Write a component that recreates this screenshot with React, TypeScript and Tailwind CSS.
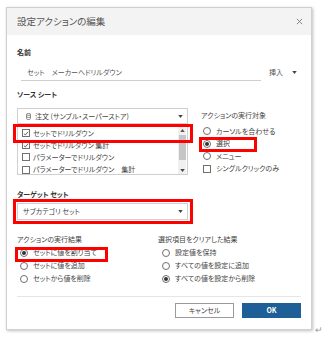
import React from "react";

const jp = "font-['Meiryo_UI','Noto_Sans_CJK_JP',sans-serif] [font-feature-settings:'palt']";

function Check({ on }: { on?: boolean }) {
  return (
    <span className="flex h-[8px] w-[8px] shrink-0 items-center justify-center border border-[#707070] bg-white">
      {on && (
        <svg viewBox="0 0 8 8" className="h-[7px] w-[7px]">
          <path d="M1.2 4.2 L3.1 6 L6.8 1.6" fill="none" stroke="#333" strokeWidth="1" />
        </svg>
      )}
    </span>
  );
}

function Radio({ on }: { on?: boolean }) {
  return (
    <span className="flex h-[8px] w-[8px] shrink-0 items-center justify-center rounded-full border border-[#707070] bg-white">
      {on && <span className="h-[4px] w-[4px] rounded-full bg-[#333]" />}
    </span>
  );
}

function Caret() {
  return (
    <svg viewBox="0 0 6 4" className="h-[3px] w-[5px]">
      <path d="M0 0 H6 L3 4 Z" fill="#444" />
    </svg>
  );
}

function RadioRow({ label, on, h }: { label: string; on?: boolean; h: string }) {
  return (
    <div className={`flex items-center gap-[5px] pl-[2px] ${h}`}>
      <Radio on={on} />
      <span>{label}</span>
    </div>
  );
}

export default function App() {
  return (
    <div className={`flex h-[337px] w-[326px] items-end bg-white text-[7px] leading-none text-[#444] ${jp}`}>
      <div className="relative mb-[7px] ml-[6px] flex h-[323px] w-[306px] flex-col border border-[#d0d0d0] bg-white shadow-[1px_1px_3px_rgba(0,0,0,0.25)]">
        <div className="flex h-[27px] items-center justify-between bg-[#f3f3f3] pl-[10px] pr-[8px]">
          <span className="text-[9.5px] text-[#555]">設定アクションの編集</span>
          <svg viewBox="0 0 8 8" className="h-[7px] w-[7px]">
            <path d="M1 1 L7 7 M7 1 L1 7" stroke="#777" strokeWidth="1" />
          </svg>
        </div>

        <div className="flex flex-1 flex-col px-[10px] pt-[11px]">
          <div className="flex h-[12px] items-center font-bold text-[#333]">名前</div>
          <div className="mt-[6px] flex h-[17px] items-center">
            <div className="ml-[4px] flex h-[17px] w-[240px] items-center border-b border-[#cfcfcf] pl-[6px] text-[#555]">
              セット　メーカーへドリルダウン
            </div>
            <span className="ml-[8px] text-[#555]">挿入</span>
            <span className="ml-[9px]">
              <Caret />
            </span>
          </div>

          <div className="mt-[7px] flex h-[12px] items-center font-bold text-[#333]">ソース シート</div>

          <div className="flex">
            <div className="mt-[8px] flex w-[171px] flex-col">
              <div className="flex h-[16px] items-center border border-[#cfcfcf] pl-[8px] pr-[4px]">
                <svg viewBox="0 0 6 8" className="h-[7px] w-[5px]">
                  <ellipse cx="3" cy="1.5" rx="2.5" ry="1.1" fill="none" stroke="#555" strokeWidth="0.8" />
                  <path d="M0.5 1.5 V6.5 A2.5 1.1 0 0 0 5.5 6.5 V1.5 M0.5 4 A2.5 1.1 0 0 0 5.5 4" fill="none" stroke="#555" strokeWidth="0.8" />
                </svg>
                <span className="ml-[4px] flex-1">注文 (サンプル・スーパーストア)</span>
                <Caret />
              </div>
              <div className="flex h-[51px] border border-t-0 border-[#cfcfcf]">
                <div className="flex flex-1 flex-col overflow-hidden pl-[4px] pt-[3px]">
                  {[
                    ["セットでドリルダウン", true],
                    ["セットでドリルダウン 集計", true],
                    ["パラメーターでドリルダウン", false],
                    ["パラメーターでドリルダウン　集計", false],
                  ].map(([t, on]) => (
                    <div key={t as string} className="flex h-[12.2px] shrink-0 items-center gap-[3px]">
                      <Check on={on as boolean} />
                      <span>{t as string}</span>
                    </div>
                  ))}
                </div>
                <div className="mr-[1px] flex w-[8px] flex-col items-center bg-[#f0f0f0] py-[2px]">
                  <svg viewBox="0 0 6 4" className="mt-[3px] h-[3px] w-[5px]">
                    <path d="M0 4 H6 L3 0 Z" fill="#555" />
                  </svg>
                  <div className="mt-[3px] h-[25px] w-[7px] bg-[#c6c6c6]" />
                  <div className="mt-auto">
                    <Caret />
                  </div>
                </div>
              </div>
            </div>

            <div className="ml-[13px] flex flex-col">
              <div className="mt-[9px] flex h-[12px] items-center">アクションの実行対象</div>
              <div className="mt-[4px] flex flex-col">
                <RadioRow label="カーソルを合わせる" h="h-[12.5px]" />
                <RadioRow label="選択" on h="h-[12.5px]" />
                <RadioRow label="メニュー" h="h-[12.5px]" />
                <div className="flex h-[12.5px] items-center gap-[5px] pl-[2px]">
                  <Check />
                  <span>シングルクリックのみ</span>
                </div>
              </div>
            </div>
          </div>

          <div className="mt-[13px] flex h-[12px] items-center font-bold text-[#333]">ターゲット セット</div>
          <div className="mt-[3px] flex h-[17px] w-[171px] items-center border border-[#cfcfcf] pl-[5px] pr-[4px]">
            <span className="flex-1">サブカテゴリ セット</span>
            <Caret />
          </div>

          <div className="mt-[13px] flex">
            <div className="flex w-[141px] flex-col">
              <div className="flex h-[12px] items-center">アクションの実行結果</div>
              <div className="mt-[1px] flex flex-col pl-[1px]">
                <RadioRow label="セットに値を割り当て" on h="h-[13px]" />
                <RadioRow label="セットに値を追加" h="h-[13px]" />
                <RadioRow label="セットから値を削除" h="h-[13px]" />
              </div>
            </div>
            <div className="flex flex-col">
              <div className="flex h-[12px] items-center">選択項目をクリアした結果</div>
              <div className="mt-[1px] flex flex-col pl-[2px]">
                <RadioRow label="設定値を保持" h="h-[13px]" />
                <RadioRow label="すべての値を設定に追加" h="h-[13px]" />
                <RadioRow label="すべての値を設定から削除" on h="h-[13px]" />
              </div>
            </div>
          </div>

          <div className="mt-[11px] h-px bg-[#e6e6e6]" />

          <div className="mt-[6px] flex justify-end gap-[8px]">
            <button className="flex h-[15px] w-[59px] items-center justify-center border border-[#9a9a9a] bg-white text-[7px] text-[#444]">
              キャンセル
            </button>
            <button className="flex h-[15px] w-[59px] items-center justify-center bg-[#1d5f96] text-[7px] font-bold text-white">
              OK
            </button>
          </div>
        </div>

        <div className="pointer-events-none absolute left-[6px] top-[116px] h-[19px] w-[180px] border-[3px] border-[#ff0000]" />
        <div className="pointer-events-none absolute left-[192px] top-[129px] h-[15px] w-[58px] border-[3px] border-[#ff0000]" />
        <div className="pointer-events-none absolute left-[6px] top-[191px] h-[25px] w-[180px] border-[3px] border-[#ff0000]" />
        <div className="pointer-events-none absolute left-[8px] top-[239px] h-[15px] w-[93px] border-[3px] border-[#ff0000]" />
      </div>
      <span className="mb-[3px] ml-[3px] text-[9px] text-[#999]">↵</span>
    </div>
  );
}
